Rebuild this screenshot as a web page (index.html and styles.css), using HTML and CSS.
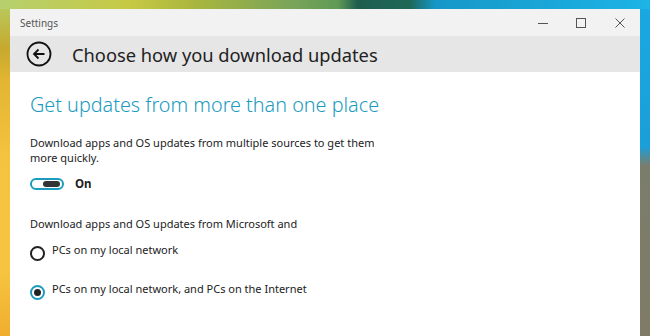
FILE: index.html
```html
<!DOCTYPE html>
<html lang="en">
<head>
    <meta charset="UTF-8">
    <title>Settings</title>
    <link rel="stylesheet" href="styles.css">
</head>
<body>
    <div class="window">
        <div class="titlebar">
            <span class="app-name">Settings</span>
            <div class="window-controls">
                <button class="ctrl" aria-label="Minimize">
                    <svg width="12" height="12" viewBox="0 0 12 12"><path d="M1 6.5h10" stroke="#555" stroke-width="1"/></svg>
                </button>
                <button class="ctrl" aria-label="Maximize">
                    <svg width="12" height="12" viewBox="0 0 12 12"><rect x="1.5" y="1.5" width="9" height="9" fill="none" stroke="#555" stroke-width="1"/></svg>
                </button>
                <button class="ctrl" aria-label="Close">
                    <svg width="12" height="12" viewBox="0 0 12 12"><path d="M1.5 1.5l9 9M10.5 1.5l-9 9" stroke="#555" stroke-width="1"/></svg>
                </button>
            </div>
        </div>

        <header class="page-header">
            <button class="back-btn" aria-label="Back">
                <svg width="26" height="26" viewBox="0 0 26 26">
                    <circle cx="13" cy="13" r="11.5" fill="none" stroke="#111" stroke-width="1.8"/>
                    <path d="M18.5 13H8M12.5 8.5L8 13l4.5 4.5" fill="none" stroke="#111" stroke-width="1.8"/>
                </svg>
            </button>
            <h1>Choose how you download updates</h1>
        </header>

        <main class="content">
            <h2>Get updates from more than one place</h2>
            <p class="desc">Download apps and OS updates from multiple sources to get them more quickly.</p>

            <div class="toggle-row">
                <span class="toggle"><span class="knob"></span></span>
                <span class="toggle-label">On</span>
            </div>

            <p class="desc source-label">Download apps and OS updates from Microsoft and</p>

            <div class="radio-list">
                <label class="radio">
                    <span class="radio-dot"></span>
                    <span>PCs on my local network</span>
                </label>
                <label class="radio checked">
                    <span class="radio-dot"></span>
                    <span>PCs on my local network, and PCs on the Internet</span>
                </label>
            </div>
        </main>
    </div>
</body>
</html>
```

FILE: styles.css
```css
* {
    margin: 0;
    padding: 0;
    box-sizing: border-box;
}

html, body {
    height: 100%;
    overflow: hidden;
}

body {
    font-family: "Noto Sans", "Open Sans", sans-serif;
    color: #222;
    background:
        linear-gradient(90deg, #b6d06e 0%, #c6c944 20%, #a9b63e 30%, #7aa45a 45%, #5f9a55 52%, #1f5e4f 55%, #1e6757 63%, #1697c8 67%, #1db4e6 100%);
    padding: 9px 10px 0 10px;
    position: relative;
}

body::before {
    content: "";
    position: absolute;
    left: 0;
    top: 9px;
    width: 10px;
    bottom: 0;
    background: linear-gradient(180deg, #b9c75a 0%, #c6a92e 12%, #e3b532 22%, #f4c33f 45%, #f6c440 80%, #f0ad2e 100%);
}

body::after {
    content: "";
    position: absolute;
    right: 0;
    top: 9px;
    width: 10px;
    bottom: 0;
    background: linear-gradient(180deg, #1aa8e2 0%, #1a9fd8 42%, #7b7d6c 48%, #7f7b66 100%);
}

.window {
    background-color: white;
    height: 100%;
    position: relative;
    z-index: 1;
}

.titlebar {
    height: 27px;
    background-color: #f2f2f2;
    display: flex;
    justify-content: space-between;
    align-items: center;
    padding-left: 10px;
}

.app-name {
    font-size: 10px;
    color: #555;
}

.window-controls {
    display: flex;
    height: 100%;
}

.ctrl {
    width: 38px;
    height: 100%;
    border: none;
    background: none;
    display: flex;
    align-items: center;
    justify-content: center;
}

.window-controls .ctrl:last-child {
    width: 40px;
}

.page-header {
    height: 36px;
    background-color: #e6e6e6;
    display: flex;
    align-items: center;
    padding-left: 16px;
}

.back-btn {
    border: none;
    background: none;
    width: 26px;
    height: 26px;
    display: flex;
    margin-right: 20px;
}

.page-header h1 {
    font-size: 18.3px;
    font-weight: 400;
    color: #222;
}

.content {
    padding: 20px 20px 0 20px;
}

.content h2 {
    font-size: 19.8px;
    font-weight: 300;
    color: #1c9bbf;
    line-height: 26px;
    margin-bottom: 17px;
}

.desc {
    font-size: 11px;
    line-height: 15px;
    max-width: 350px;
    color: #222;
}

.toggle-row {
    display: flex;
    align-items: center;
    gap: 11px;
    margin-top: 11px;
}

.toggle {
    width: 34px;
    height: 12px;
    border: 2px solid #1c9bbf;
    border-radius: 6px;
    display: flex;
    justify-content: flex-end;
    align-items: center;
    padding-right: 2px;
}

.knob {
    width: 17px;
    height: 6px;
    border-radius: 3px;
    background-color: #333;
}

.toggle-label {
    font-size: 11.5px;
    font-weight: 700;
}

.source-label {
    margin-top: 25px;
}

.radio-list {
    display: flex;
    flex-direction: column;
    gap: 20px;
    margin-top: 11px;
}

.radio {
    display: flex;
    align-items: flex-start;
    gap: 7px;
    font-size: 11px;
    line-height: 15px;
}

.radio-dot {
    width: 15px;
    height: 15px;
    border: 2px solid #222;
    border-radius: 50%;
    margin-top: 4px;
    display: flex;
    align-items: center;
    justify-content: center;
}

.radio.checked .radio-dot {
    border-color: #1c9bbf;
}

.radio.checked .radio-dot::after {
    content: "";
    width: 7px;
    height: 7px;
    border-radius: 50%;
    background-color: #222;
}
```
